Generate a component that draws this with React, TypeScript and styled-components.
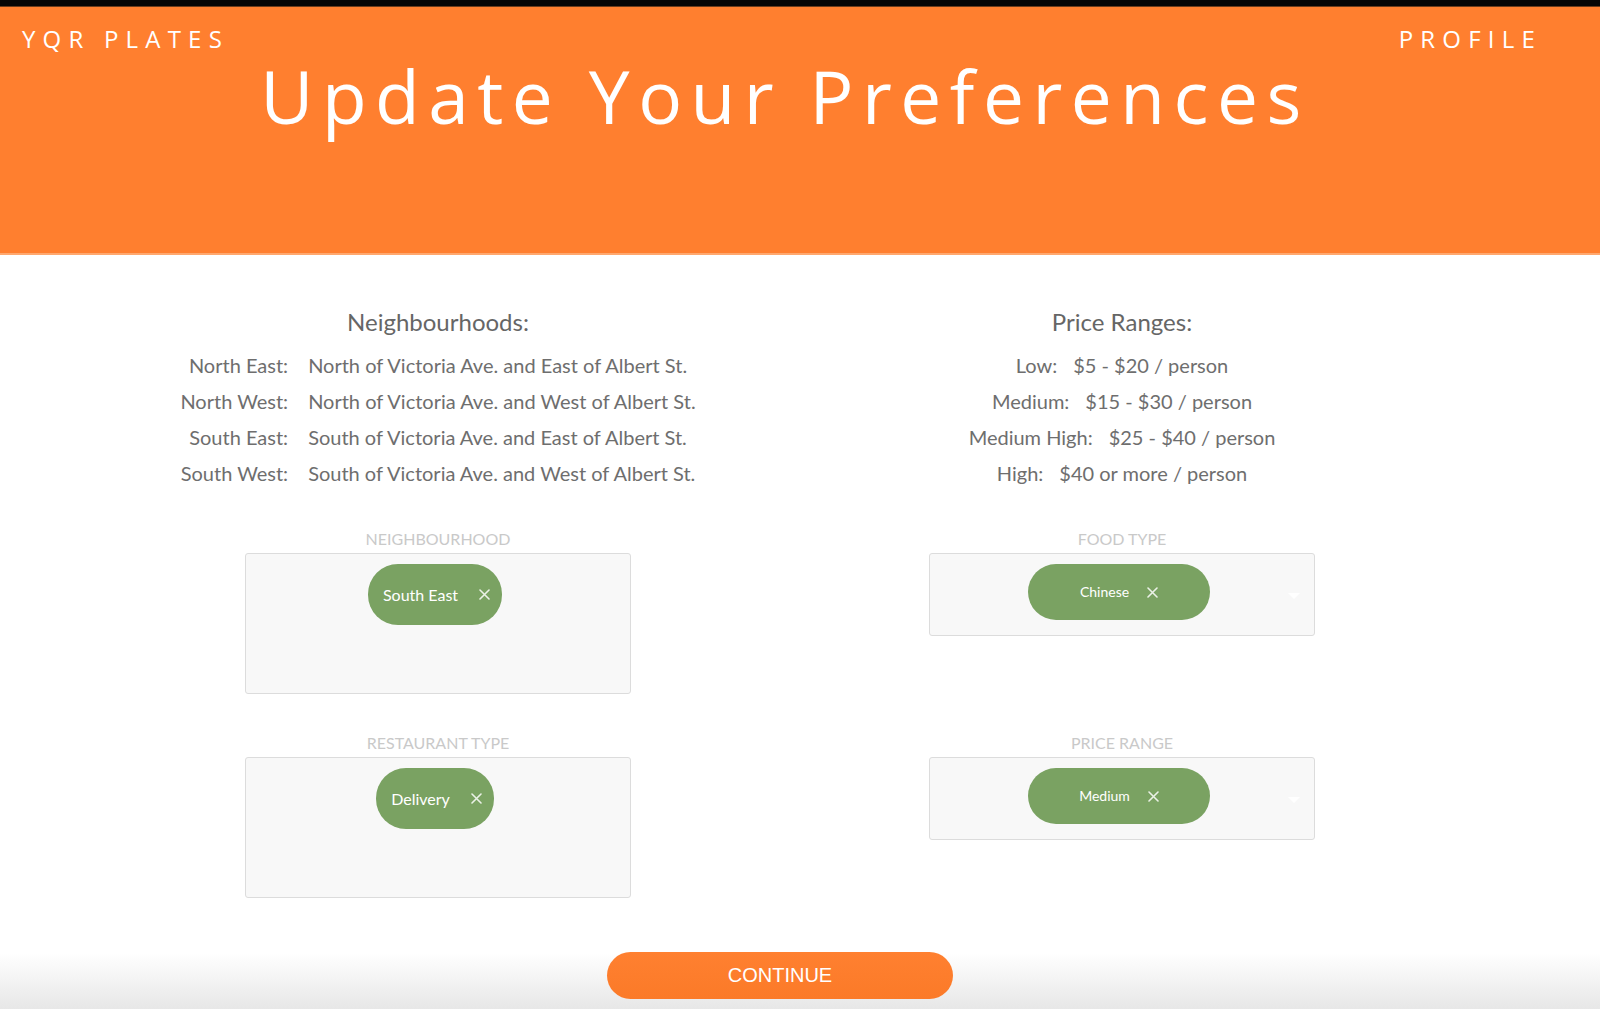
import React from "react";
import styled, { createGlobalStyle } from "styled-components";

const Global = createGlobalStyle`
  html, body { margin: 0; padding: 0; background: #fff; }
  body { font-family: "Lato", "Open Sans", sans-serif; }
  * { box-sizing: border-box; }
`;

const Page = styled.div`
  height: 100vh;
  min-height: 1009px;
  display: flex;
  flex-direction: column;
  background: linear-gradient(to bottom, #fff 0, #fff calc(100% - 56px), #e7e7e7 100%);
  overflow: hidden;
`;

const TopStrip = styled.div`
  height: 7px;
  background: #050505;
  border-bottom: 1px solid #6a3c1c;
`;

const Header = styled.header`
  height: 248px;
  background: #ff7f2f;
  border-bottom: 2px solid #ffa86f;
  display: flex;
  flex-direction: column;
`;

const Nav = styled.nav`
  display: flex;
  justify-content: space-between;
  padding: 20px 58px 0 22px;
`;

const NavLink = styled.a`
  font-family: "Open Sans", sans-serif;
  font-size: 24px;
  line-height: 24px;
  letter-spacing: 7.2px;
  color: #fff;
  text-decoration: none;
`;

const Title = styled.h1`
  margin: 8px 30px 0 0;
  text-align: center;
  font-family: "Open Sans", sans-serif;
  font-weight: 400;
  font-size: 73px;
  line-height: 73px;
  letter-spacing: 8.5px;
  color: #fff;
`;

const Main = styled.main`
  padding-right: 40px;
  padding-top: 53px;
`;

const Container = styled.div`
  max-width: 1368px;
  margin: 0 auto;
  display: flex;
  flex-direction: column;
  align-items: center;
`;

const TwoCol = styled.div<{ $rowGap?: number; $top?: number }>`
  width: 100%;
  display: grid;
  grid-template-columns: 1fr 1fr;
  row-gap: ${(p) => p.$rowGap ?? 0}px;
  margin-top: ${(p) => p.$top ?? 0}px;
`;

const InfoBlock = styled.section`
  display: flex;
  flex-direction: column;
  align-items: center;
`;

const InfoHeading = styled.h2`
  margin: 0 0 12px;
  font-family: "Lato", sans-serif;
  font-weight: 400;
  font-size: 24px;
  line-height: 27px;
  color: #666;
`;

const DefTable = styled.div`
  display: grid;
  grid-template-columns: auto auto;
  column-gap: 20px;
  font-size: 20px;
  line-height: 36px;
  color: #6e6e6e;
`;

const DefLabel = styled.span`
  text-align: right;
`;

const DefValue = styled.span`
  text-align: left;
`;

const PriceRow = styled.div`
  display: flex;
  justify-content: center;
  gap: 16px;
  font-size: 20px;
  line-height: 36px;
  color: #6e6e6e;
`;

const Field = styled.div`
  display: flex;
  flex-direction: column;
  align-items: center;
`;

const FieldLabel = styled.label`
  font-family: "Lato", sans-serif;
  font-size: 16px;
  line-height: 19px;
  color: #c9c9c9;
  text-transform: uppercase;
  margin-bottom: 5px;
`;

const SelectBox = styled.div<{ $tall?: boolean }>`
  position: relative;
  width: 386px;
  height: ${(p) => (p.$tall ? 141 : 83)}px;
  background: #f8f8f8;
  border: 1px solid #dcdcdc;
  border-radius: 3px;
  display: flex;
  justify-content: center;
  align-items: flex-start;
  padding: 10px 6px 0 0;
`;

const Chip = styled.div<{ $wide?: boolean }>`
  display: flex;
  align-items: center;
  justify-content: center;
  gap: ${(p) => (p.$wide ? 18 : 21)}px;
  height: ${(p) => (p.$wide ? 56 : 61)}px;
  min-width: ${(p) => (p.$wide ? 182 : 0)}px;
  padding: ${(p) => (p.$wide ? "0 20px" : "0 12px 0 15px")};
  border-radius: 30px;
  background: #7aa262;
  color: #fff;
  font-family: "Lato", sans-serif;
  font-size: ${(p) => (p.$wide ? 14 : 16)}px;
  line-height: 1;
`;

const Caret = styled.span`
  position: absolute;
  right: 14px;
  top: 39px;
  width: 0;
  height: 0;
  border-left: 6px solid transparent;
  border-right: 6px solid transparent;
  border-top: 6px solid #ffffff;
`;

const ContinueButton = styled.button`
  margin-top: 54px;
  width: 346px;
  height: 47px;
  border: none;
  border-radius: 24px;
  background: linear-gradient(to bottom, #ff8030, #fb7a28);
  color: #fff;
  font-family: "Liberation Sans", Arial, sans-serif;
  font-size: 20px;
  cursor: pointer;
`;

const CloseIcon = () => (
  <svg width="11" height="11" viewBox="0 0 11 11" aria-hidden="true">
    <path d="M1 1 L10 10 M10 1 L1 10" stroke="rgba(255,255,255,0.85)" strokeWidth="1.6" strokeLinecap="round" />
  </svg>
);

const neighbourhoods = [
  ["North East:", "North of Victoria Ave. and East of Albert St."],
  ["North West:", "North of Victoria Ave. and West of Albert St."],
  ["South East:", "South of Victoria Ave. and East of Albert St."],
  ["South West:", "South of Victoria Ave. and West of Albert St."],
];

const prices = [
  ["Low:", "$5 - $20 / person"],
  ["Medium:", "$15 - $30 / person"],
  ["Medium High:", "$25 - $40 / person"],
  ["High:", "$40 or more / person"],
];

export default function App() {
  return (
    <>
      <Global />
      <Page>
        <TopStrip />
        <Header>
          <Nav>
            <NavLink href="#">YQR PLATES</NavLink>
            <NavLink href="#">PROFILE</NavLink>
          </Nav>
          <Title>Update Your Preferences</Title>
        </Header>
        <Main>
          <Container>
            <TwoCol>
              <InfoBlock>
                <InfoHeading>Neighbourhoods:</InfoHeading>
                <DefTable>
                  {neighbourhoods.map(([k, v]) => (
                    <React.Fragment key={k}>
                      <DefLabel>{k}</DefLabel>
                      <DefValue>{v}</DefValue>
                    </React.Fragment>
                  ))}
                </DefTable>
              </InfoBlock>
              <InfoBlock>
                <InfoHeading>Price Ranges:</InfoHeading>
                {prices.map(([k, v]) => (
                  <PriceRow key={k}>
                    <span>{k}</span>
                    <span>{v}</span>
                  </PriceRow>
                ))}
              </InfoBlock>
            </TwoCol>
            <TwoCol $rowGap={39} $top={38}>
              <Field>
                <FieldLabel>Neighbourhood</FieldLabel>
                <SelectBox $tall>
                  <Chip>
                    South East <CloseIcon />
                  </Chip>
                </SelectBox>
              </Field>
              <Field>
                <FieldLabel>Food Type</FieldLabel>
                <SelectBox>
                  <Chip $wide>
                    Chinese <CloseIcon />
                  </Chip>
                  <Caret />
                </SelectBox>
              </Field>
              <Field>
                <FieldLabel>Restaurant Type</FieldLabel>
                <SelectBox $tall>
                  <Chip>
                    Delivery <CloseIcon />
                  </Chip>
                </SelectBox>
              </Field>
              <Field>
                <FieldLabel>Price Range</FieldLabel>
                <SelectBox>
                  <Chip $wide>
                    Medium <CloseIcon />
                  </Chip>
                  <Caret />
                </SelectBox>
              </Field>
            </TwoCol>
            <ContinueButton>CONTINUE</ContinueButton>
          </Container>
        </Main>
      </Page>
    </>
  );
}
